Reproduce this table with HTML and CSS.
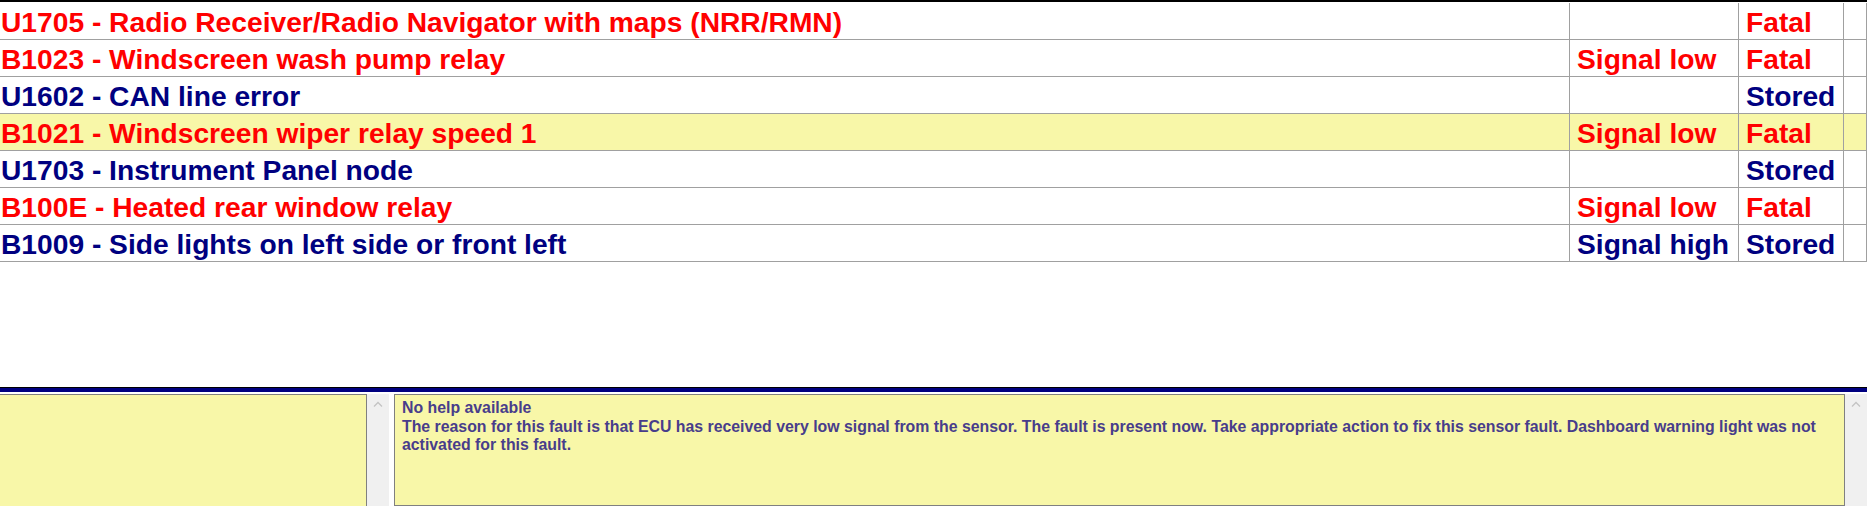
FILE: index.html
```html
<!DOCTYPE html>
<html lang="en">
<head>
    <meta charset="UTF-8">
    <title>Fault codes</title>
    <link rel="stylesheet" href="styles.css">
</head>
<body>
    <div class="fault-list">
        <div class="fault-row fatal">
            <div class="cell desc">U1705 - Radio Receiver/Radio Navigator with maps (NRR/RMN)</div>
            <div class="cell state"></div>
            <div class="cell type">Fatal</div>
            <div class="cell spare"></div>
        </div>
        <div class="fault-row fatal">
            <div class="cell desc">B1023 - Windscreen wash pump relay</div>
            <div class="cell state">Signal low</div>
            <div class="cell type">Fatal</div>
            <div class="cell spare"></div>
        </div>
        <div class="fault-row stored">
            <div class="cell desc">U1602 - CAN line error</div>
            <div class="cell state"></div>
            <div class="cell type">Stored</div>
            <div class="cell spare"></div>
        </div>
        <div class="fault-row fatal selected">
            <div class="cell desc">B1021 - Windscreen wiper relay speed 1</div>
            <div class="cell state">Signal low</div>
            <div class="cell type">Fatal</div>
            <div class="cell spare"></div>
        </div>
        <div class="fault-row stored">
            <div class="cell desc">U1703 - Instrument Panel node</div>
            <div class="cell state"></div>
            <div class="cell type">Stored</div>
            <div class="cell spare"></div>
        </div>
        <div class="fault-row fatal">
            <div class="cell desc">B100E - Heated rear window relay</div>
            <div class="cell state">Signal low</div>
            <div class="cell type">Fatal</div>
            <div class="cell spare"></div>
        </div>
        <div class="fault-row stored">
            <div class="cell desc">B1009 - Side lights on left side or front left</div>
            <div class="cell state">Signal high</div>
            <div class="cell type">Stored</div>
            <div class="cell spare"></div>
        </div>
    </div>

    <div class="divider"></div>

    <div class="info-area">
        <div class="note-panel"></div>
        <div class="scrollbar">
            <svg width="10" height="6" viewBox="0 0 10 6"><polyline points="1,5.5 5,1.5 9,5.5" fill="none" stroke="#c4c4c4" stroke-width="1.3"/></svg>
        </div>
        <div class="help-panel">
            No help available<br>
            The reason for this fault is that ECU has received very low signal from the sensor. The fault is present now. Take appropriate action to fix this sensor fault. Dashboard warning light was not activated for this fault.
        </div>
        <div class="scrollbar">
            <svg width="10" height="6" viewBox="0 0 10 6"><polyline points="1,5.5 5,1.5 9,5.5" fill="none" stroke="#c4c4c4" stroke-width="1.3"/></svg>
        </div>
    </div>
</body>
</html>
```

FILE: styles.css
```css
* {
    margin: 0;
    padding: 0;
    box-sizing: border-box;
}

body {
    font-family: 'Liberation Sans', Arial, sans-serif;
    background: white;
    width: 1867px;
    height: 509px;
    overflow: hidden;
}

.fault-list {
    height: 387px;
    border-top: 2px solid #000;
    padding-top: 1px;
}

.fault-row {
    display: grid;
    grid-template-columns: 1570px 169px 105px 23px;
    height: 37px;
    border-bottom: 1px solid #a0a0a0;
    font-size: 28.2px;
    font-weight: bold;
    line-height: 36px;
    white-space: nowrap;
}

.fault-row.fatal {
    color: #ff0000;
}

.fault-row.stored {
    color: #000080;
}

.fault-row.selected {
    background: #f8f7a8;
}

.cell {
    border-right: 1px solid #a0a0a0;
    padding-top: 1px;
    padding-left: 7px;
    overflow: hidden;
}

.cell.desc {
    padding-left: 1px;
}

.divider {
    height: 3px;
    border-top: 1px solid #000;
    border-bottom: 4px solid #000080;
    margin-bottom: 2px;
}

.info-area {
    display: flex;
    height: 112px;
}

.note-panel {
    width: 367px;
    background: #f8f7a8;
    border-top: 1px solid #808080;
    border-right: 1px solid #808080;
}

.scrollbar {
    width: 22px;
    background: #f0f0f0;
    display: flex;
    justify-content: center;
    padding-top: 7px;
}

.help-panel {
    width: 1451px;
    margin-left: 5px;
    background: #f8f7a8;
    border: 1px solid #808080;
    padding: 4px 7px;
    color: #483d8b;
    font-size: 15.85px;
    font-weight: bold;
    line-height: 18.5px;
}
```
